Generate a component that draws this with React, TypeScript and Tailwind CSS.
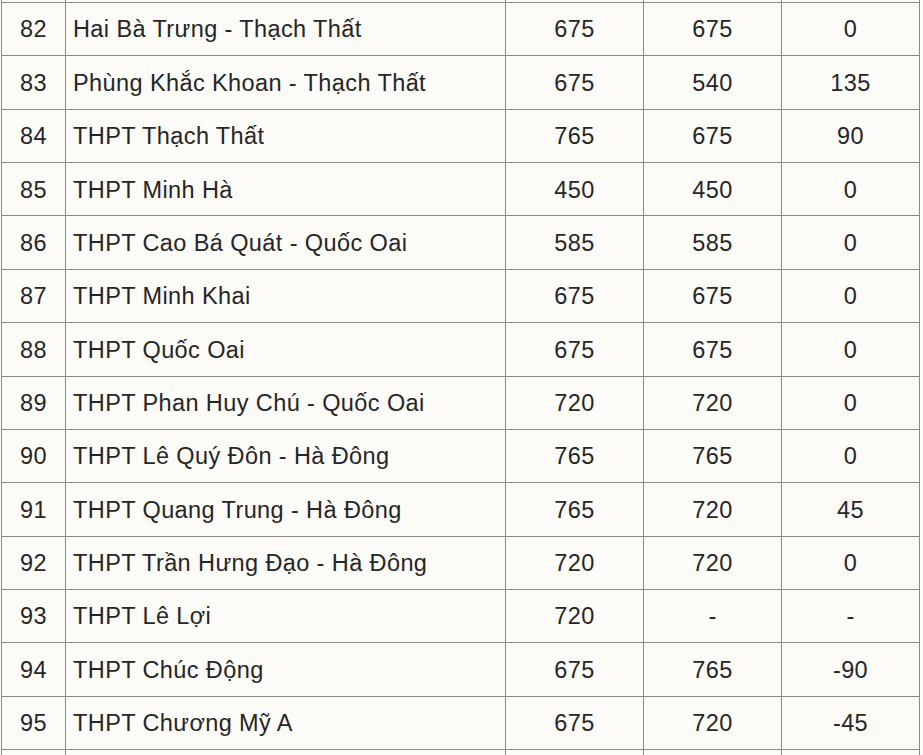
import React from "react";

const rows: [string, string, string, string, string][] = [
  ["82", "Hai Bà Trưng - Thạch Thất", "675", "675", "0"],
  ["83", "Phùng Khắc Khoan - Thạch Thất", "675", "540", "135"],
  ["84", "THPT Thạch Thất", "765", "675", "90"],
  ["85", "THPT Minh Hà", "450", "450", "0"],
  ["86", "THPT Cao Bá Quát - Quốc Oai", "585", "585", "0"],
  ["87", "THPT Minh Khai", "675", "675", "0"],
  ["88", "THPT Quốc Oai", "675", "675", "0"],
  ["89", "THPT Phan Huy Chú - Quốc Oai", "720", "720", "0"],
  ["90", "THPT Lê Quý Đôn - Hà Đông", "765", "765", "0"],
  ["91", "THPT Quang Trung - Hà Đông", "765", "720", "45"],
  ["92", "THPT Trần Hưng Đạo - Hà Đông", "720", "720", "0"],
  ["93", "THPT Lê Lợi", "720", "-", "-"],
  ["94", "THPT Chúc Động", "675", "765", "-90"],
  ["95", "THPT Chương Mỹ A", "675", "720", "-45"],
];

export default function App() {
  return (
    <div
      className="w-[923px] h-[755px] overflow-hidden bg-[#fcfbf8] text-[#262626]"
      style={{ fontFamily: '"Liberation Sans", Arial, sans-serif' }}
    >
      <table className="ml-px -mt-px border-collapse text-[23.5px] leading-none tracking-[0.4px] w-[918px] table-fixed">
        <colgroup>
          <col className="w-[64px]" />
          <col className="w-[440px]" />
          <col className="w-[138px]" />
          <col className="w-[138px]" />
          <col className="w-[138px]" />
        </colgroup>
        <tbody>
          <tr className="h-[3px]">
            <td className="border border-[#8a8a8a] p-0" />
            <td className="border border-[#8a8a8a] p-0" />
            <td className="border border-[#8a8a8a] p-0" />
            <td className="border border-[#8a8a8a] p-0" />
            <td className="border border-[#8a8a8a] p-0" />
          </tr>
          {rows.map((r) => (
            <tr key={r[0]} className="h-[53.36px]">
              <td className="border border-[#8a8a8a] pt-[2px] pb-0 px-0 text-center">{r[0]}</td>
              <td className="border border-[#8a8a8a] pt-[2px] pb-0 pl-[7px] text-left whitespace-nowrap">{r[1]}</td>
              <td className="border border-[#8a8a8a] pt-[2px] pb-0 px-0 text-center">{r[2]}</td>
              <td className="border border-[#8a8a8a] pt-[2px] pb-0 px-0 text-center">{r[3]}</td>
              <td className="border border-[#8a8a8a] pt-[2px] pb-0 px-0 text-center">{r[4]}</td>
            </tr>
          ))}
          <tr className="h-[20px]">
            <td className="border border-[#8a8a8a] p-0" />
            <td className="border border-[#8a8a8a] p-0" />
            <td className="border border-[#8a8a8a] p-0" />
            <td className="border border-[#8a8a8a] p-0" />
            <td className="border border-[#8a8a8a] p-0" />
          </tr>
        </tbody>
      </table>
    </div>
  );
}
